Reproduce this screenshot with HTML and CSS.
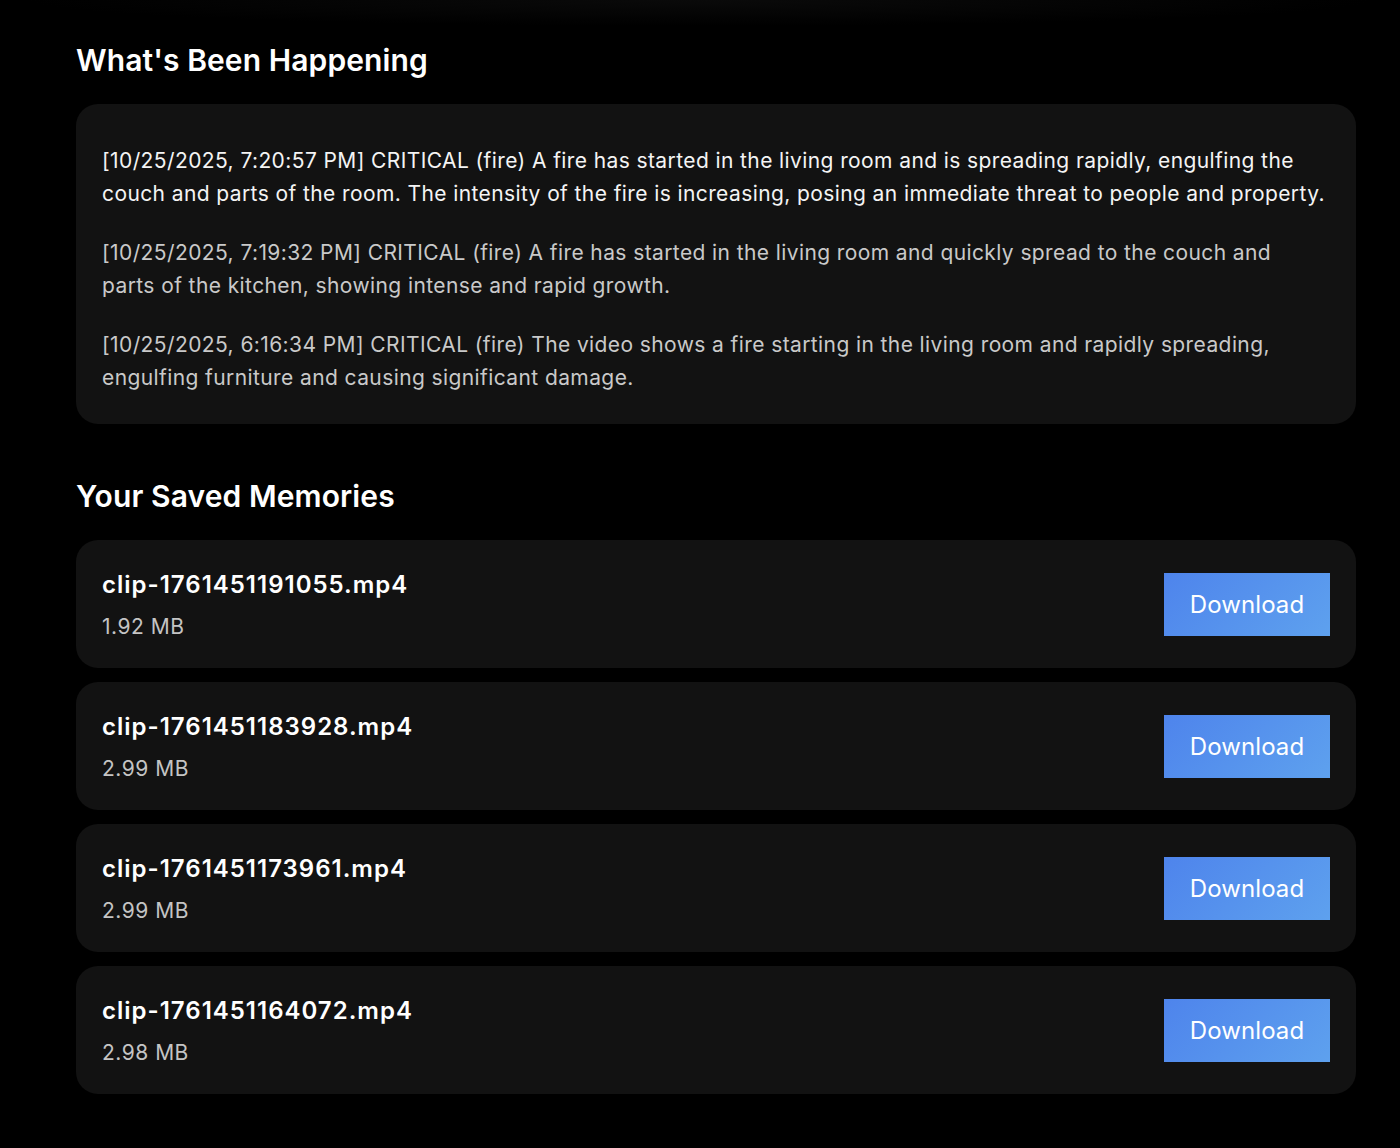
FILE: index.html
```html
<!DOCTYPE html>
<html lang="en">
<head>
<meta charset="utf-8">
<title>Memories</title>
<link rel="stylesheet" href="styles.css">
</head>
<body>
<main class="page">
  <section class="section">
    <h2 class="section-title">What's Been Happening</h2>
    <div class="card events">
      <p class="event event-latest">[10/25/2025, 7:20:57 PM] CRITICAL (fire) A fire has started in the living room and is spreading rapidly, engulfing the couch and parts of the room. The intensity of the fire is increasing, posing an immediate threat to people and property.</p>
      <p class="event">[10/25/2025, 7:19:32 PM] CRITICAL (fire) A fire has started in the living room and quickly spread to the couch and parts of the kitchen, showing intense and rapid growth.</p>
      <p class="event">[10/25/2025, 6:16:34 PM] CRITICAL (fire) The video shows a fire starting in the living room and rapidly spreading, engulfing furniture and causing significant damage.</p>
    </div>
  </section>
  <section class="section memories">
    <h2 class="section-title">Your Saved Memories</h2>
    <ul class="clip-list">
      <li class="card clip">
        <div class="clip-info">
          <div class="clip-name">clip-1761451191055.mp4</div>
          <div class="clip-size">1.92 MB</div>
        </div>
        <button class="download">Download</button>
      </li>
      <li class="card clip">
        <div class="clip-info">
          <div class="clip-name">clip-1761451183928.mp4</div>
          <div class="clip-size">2.99 MB</div>
        </div>
        <button class="download">Download</button>
      </li>
      <li class="card clip">
        <div class="clip-info">
          <div class="clip-name">clip-1761451173961.mp4</div>
          <div class="clip-size">2.99 MB</div>
        </div>
        <button class="download">Download</button>
      </li>
      <li class="card clip">
        <div class="clip-info">
          <div class="clip-name">clip-1761451164072.mp4</div>
          <div class="clip-size">2.98 MB</div>
        </div>
        <button class="download">Download</button>
      </li>
    </ul>
  </section>
</main>
</body>
</html>
```

FILE: styles.css
```css
html, body {
  margin: 0;
  padding: 0;
  background: #000;
}
body {
  font-family: Inter, "Noto Sans", "Liberation Sans", sans-serif;
  color: #f2f2f2;
  min-height: 1148px;
  background: radial-gradient(ellipse 48% 26px at 50% 0, #0a0a0a 0%, #000 100%) no-repeat, #000;
}
.page {
  width: 1280px;
  margin: 0 0 0 76px;
  padding-top: 40px;
}
.section-title {
  margin: 0 0 24px 0;
  font-size: 30px;
  line-height: 40px;
  font-weight: 600;
  letter-spacing: 0.1px;
  color: #ffffff;
}
.card {
  background: #121212;
  border-radius: 22px;
}
.events {
  padding: 40px 26px 30px;
}
.event {
  margin: 0 0 26px;
  font-size: 21px;
  line-height: 33px;
  color: #c9c9c9;
  letter-spacing: 0.4px;
}
.event:last-child {
  margin-bottom: 0;
}
.event-latest {
  color: #f4f4f4;
}
.memories {
  margin-top: 52px;
}
.clip-list {
  list-style: none;
  margin: 0;
  padding: 0;
  display: flex;
  flex-direction: column;
  gap: 14px;
}
.clip {
  height: 128px;
  box-sizing: border-box;
  padding: 0 26px;
  display: flex;
  align-items: center;
  justify-content: space-between;
}
.clip-info {
  display: flex;
  flex-direction: column;
  gap: 14px;
  margin-top: 2px;
}
.clip-name {
  font-size: 24px;
  line-height: 30px;
  font-weight: 600;
  color: #ffffff;
  letter-spacing: 1px;
}
.clip-size {
  font-size: 21px;
  line-height: 26px;
  color: #c4c4c4;
  letter-spacing: 0.5px;
}
.download {
  width: 166px;
  height: 63px;
  border: none;
  border-radius: 0;
  background: linear-gradient(135deg, #4e84ec 0%, #5ea1ee 100%);
  color: #ffffff;
  font-family: inherit;
  font-size: 24px;
  font-weight: 400;
  letter-spacing: 0.1px;
  cursor: pointer;
}
```
